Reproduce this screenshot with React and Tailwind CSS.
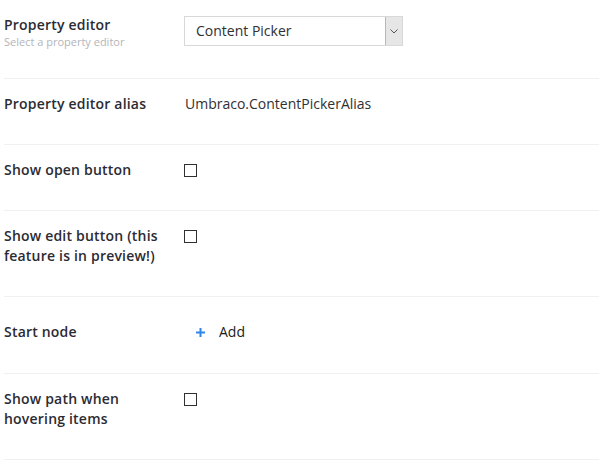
import React from 'react';

const font = { fontFamily: '"Open Sans", "Liberation Sans", sans-serif' };

function Checkbox() {
    return <div className="mt-[4px] w-[13px] h-[13px] border border-[#303033] bg-white" />;
}

function Row({ label, description, labelClass = '', children }) {
    return (
        <div className="flex pt-[15px] pb-[30px] border-b border-[#f0f0f2]">
            <div className={`w-[160px] mr-[20px] shrink-0 ${labelClass}`}>
                <div className="text-[14px] leading-[20px] font-semibold tracking-[0.2px] text-[#2b2b33]">{label}</div>
                {description && (
                    <div className="text-[11px] leading-[13px] text-[#b4b4b9]">{description}</div>
                )}
            </div>
            <div className="flex-1 min-w-0">{children}</div>
        </div>
    );
}

export default function App() {
    return (
        <div className="w-[599px] h-[473px] bg-white pl-[4px]" style={font}>
            <Row label="Property editor" description="Select a property editor">
                <div className="mt-[1px] w-[219px] h-[30px] border border-[#d8d7d9] flex items-stretch bg-white">
                    <div className="flex-1 pl-[11px] text-[14px] leading-[28px] text-[#303033]">Content Picker</div>
                    <div className="w-[17px] bg-[#e6e6e6] border-l border-[#b8b8b8] flex items-center justify-center">
                        <svg width="8" height="5" viewBox="0 0 8 5">
                            <path d="M0.5 0.5 L4 4 L7.5 0.5" fill="none" stroke="#555" strokeWidth="1" />
                        </svg>
                    </div>
                </div>
            </Row>
            <Row label="Property editor alias">
                <div className="text-[14px] leading-[20px] text-[#303033] pl-[1px]">Umbraco.ContentPickerAlias</div>
            </Row>
            <Row label="Show open button">
                <Checkbox />
            </Row>
            <Row label="Show edit button (this feature is in preview!)">
                <Checkbox />
            </Row>
            <Row label="Start node" labelClass="pt-[10px]">
                <div className="h-[31px] pt-[10px] flex items-start text-[14px] leading-[20px] text-[#1a1a1a]">
                    <span className="ml-[12px] w-[23px] h-[20px] flex items-center">
                        <svg width="9" height="9" viewBox="0 0 9 9">
                            <path d="M4.5 0 V9 M0 4.5 H9" stroke="#2f86e8" strokeWidth="2" />
                        </svg>
                    </span>
                    <span>Add</span>
                </div>
            </Row>
            <Row label="Show path when hovering items">
                <Checkbox />
            </Row>
        </div>
    );
}
